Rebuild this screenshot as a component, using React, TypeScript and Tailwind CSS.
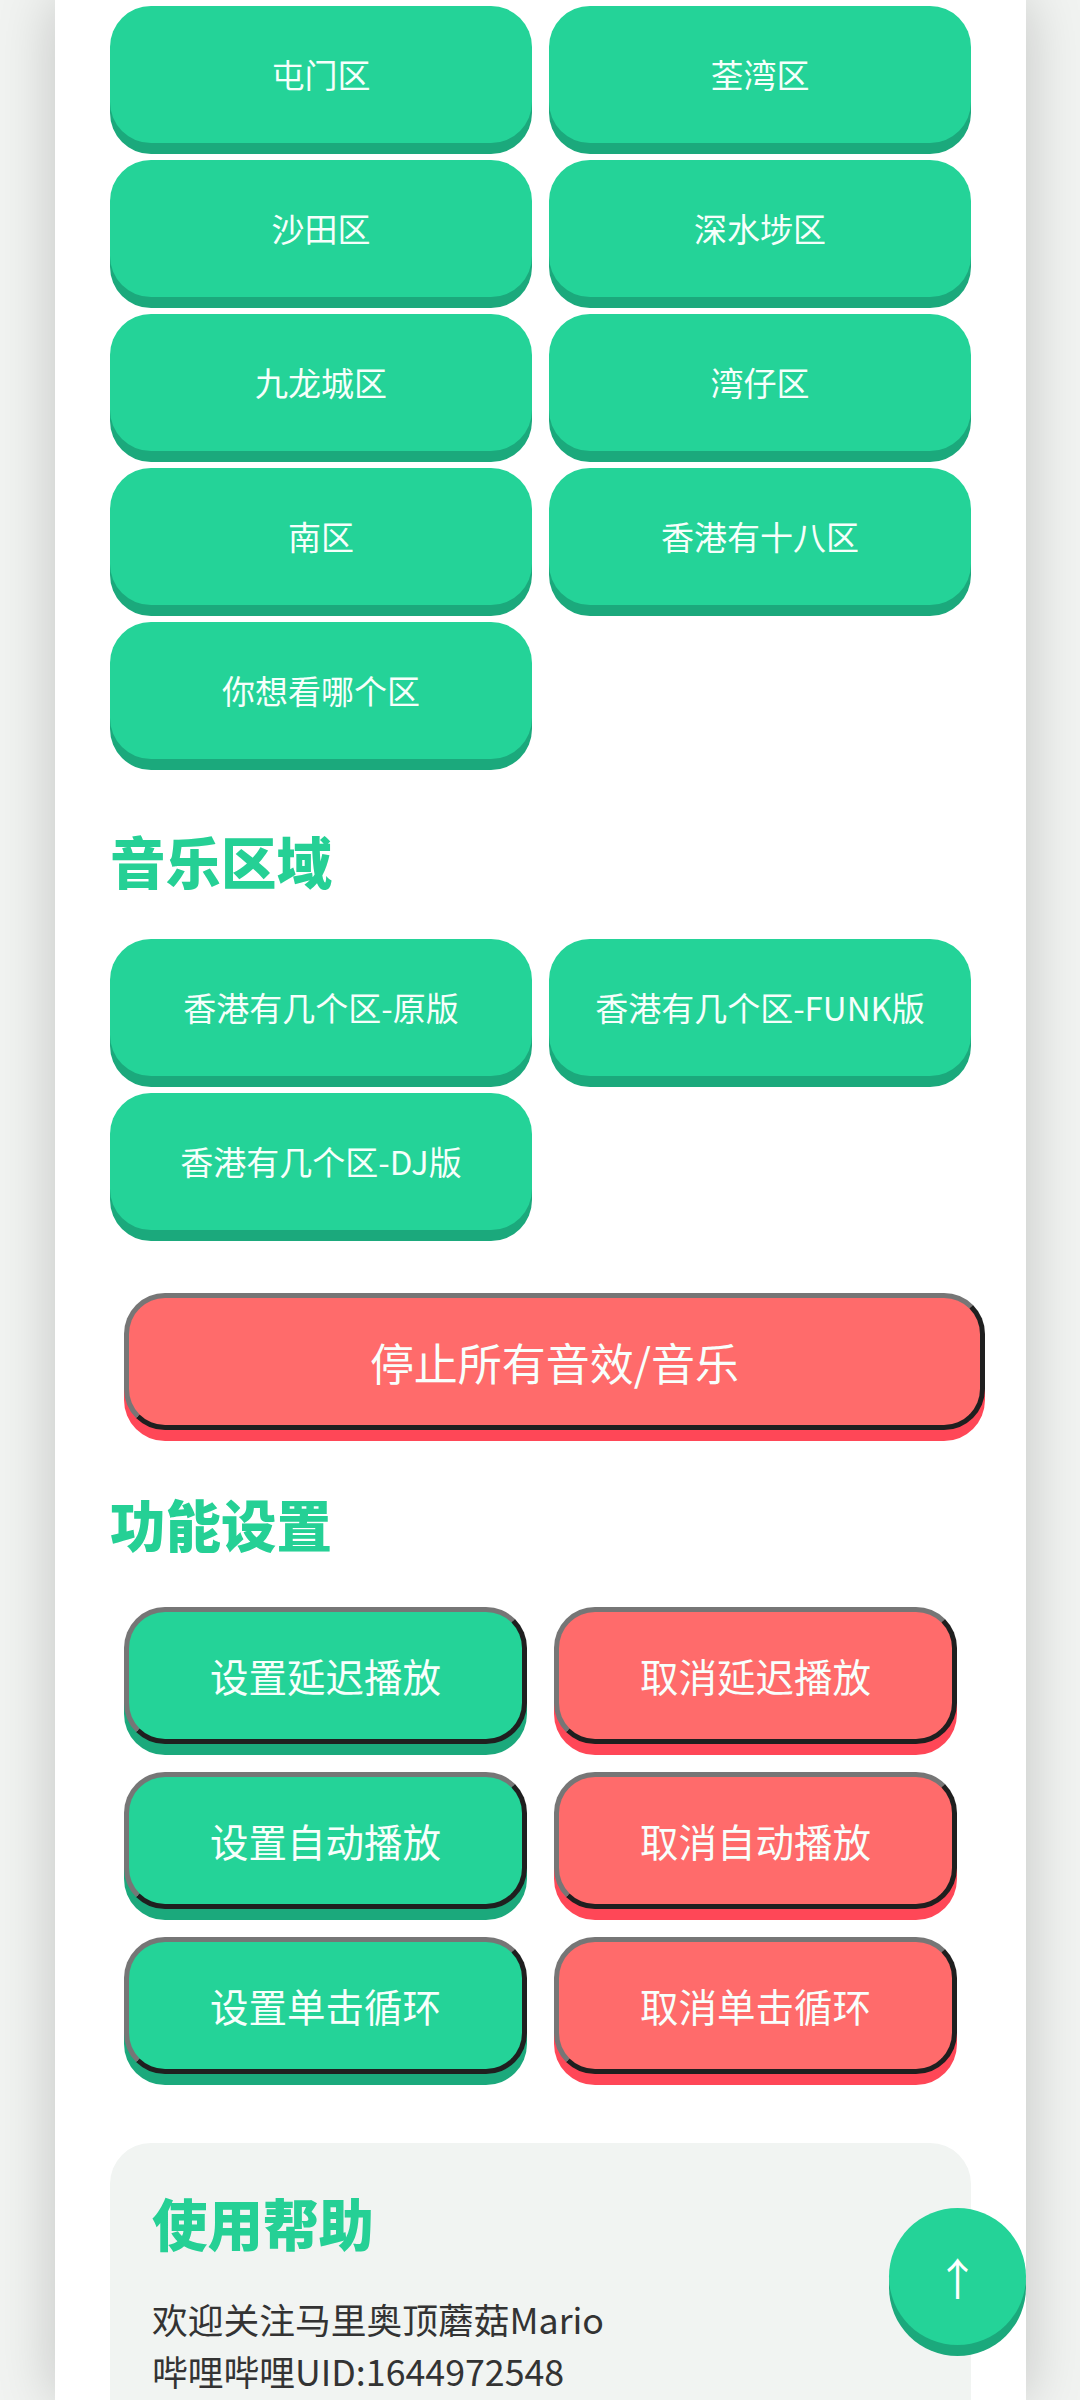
const font = { fontFamily: '"Noto Sans CJK SC", "Noto Sans", sans-serif' };

function Btn({ label }: { label: string }) {
  return (
    <button className="h-[137px] rounded-[41px] bg-[#24d398] text-[33px] text-[#f6fffb] shadow-[0_11px_0_#1ba97c]">
      {label}
    </button>
  );
}

function OutBtn({ label, red, wide }: { label: string; red?: boolean; wide?: boolean }) {
  const tone = red ? "bg-[#ff6b6b] shadow-[0_11px_0_#ff4757]" : "bg-[#24d398] shadow-[0_11px_0_#1ba97c]";
  const size = wide ? "w-[861px] text-[44px]" : "w-[403px] text-[38.5px]";
  return (
    <button
      className={`${tone} ${size} h-[137px] rounded-[41px] border-[5.5px] border-t-[#767676] border-l-[#767676] border-r-[#1f1f1f] border-b-[#1f1f1f] text-[#f8fffc]`}
    >
      {label}
    </button>
  );
}

function Heading({ children, className }: { children: string; className: string }) {
  return <h2 className={`text-[55.5px] leading-[80px] font-black text-[#25d095] ${className}`}>{children}</h2>;
}

export default function App() {
  return (
    <div style={font} className="relative h-[2400px] w-[1080px] overflow-hidden bg-[#f1f3f1]">
      <div className="ml-[55px] h-[2400px] w-[971px] bg-[#ffffff] px-[55px] pt-[6px] shadow-[0_0_55px_rgba(0,0,0,0.2)]">
        <div className="grid grid-cols-2 gap-x-[17px] gap-y-[17px]">
          {["屯门区", "荃湾区", "沙田区", "深水埗区", "九龙城区", "湾仔区", "南区", "香港有十八区", "你想看哪个区"].map((t) => (
            <Btn key={t} label={t} />
          ))}
        </div>
        <Heading className="mt-[61px]">音乐区域</Heading>
        <div className="mt-[39px] grid grid-cols-2 gap-x-[17px] gap-y-[17px]">
          {["香港有几个区-原版", "香港有几个区-FUNK版", "香港有几个区-DJ版"].map((t) => (
            <Btn key={t} label={t} />
          ))}
        </div>
        <div className="mt-[63px] ml-[14px]">
          <OutBtn label="停止所有音效/音乐" red wide />
        </div>
        <Heading className="mt-[53px]">功能设置</Heading>
        <div className="mt-[44px] ml-[14px] flex flex-col gap-[28px]">
          {[
            ["设置延迟播放", "取消延迟播放"],
            ["设置自动播放", "取消自动播放"],
            ["设置单击循环", "取消单击循环"],
          ].map(([a, b]) => (
            <div key={a} className="flex gap-[27px]">
              <OutBtn label={a} />
              <OutBtn label={b} red />
            </div>
          ))}
        </div>
        <div className="mt-[69px] rounded-[41px] bg-[#f1f4f2] px-[42px] pt-[39px] pb-[80px]">
          <Heading className="">使用帮助</Heading>
          <p className="mt-[31px] text-[35.75px] leading-[52px] text-[#333333]">
            欢迎关注马里奥顶蘑菇Mario
            <br />
            哔哩哔哩UID:1644972548
          </p>
        </div>
      </div>
      <button className="absolute top-[2208px] left-[889px] h-[137px] w-[137px] rounded-full bg-[#24d398] text-[44px] text-[#ffffff] shadow-[0_11px_0_#1ba97c]">
        ↑
      </button>
    </div>
  );
}
